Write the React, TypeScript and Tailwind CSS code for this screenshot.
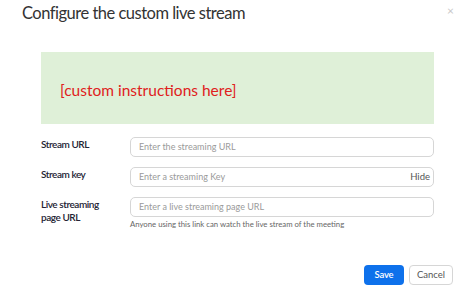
import React from "react";

function Field({ label, placeholder, hide, help }: { label: React.ReactNode; placeholder: string; hide?: boolean; help?: string }) {
  return (
    <div className="flex">
      <div className="w-[89px] text-[10px] tracking-[-0.45px] leading-[13px] font-semibold text-[#232333] pt-[1px]">{label}</div>
      <div className="flex flex-col">
        <div className="w-[304px] h-[20px] border border-[#d6d6d6] rounded-[5px] flex items-center justify-between pl-[8px] pr-[3px]">
          <span className="text-[9px] text-[#9a9a9a]">{placeholder}</span>
          {hide && <span className="text-[9.5px] text-[#555]">Hide</span>}
        </div>
        {help && <div className="text-[7.75px] text-[#666] mt-[2px] leading-[10px]">{help}</div>}
      </div>
    </div>
  );
}

export default function App() {
  return (
    <div className="w-[474px] h-[299px] bg-white relative overflow-hidden font-[Lato,'Open_Sans',sans-serif]">
      <div className="absolute right-[20px] top-[2px] text-[12px] text-[#c8c8c8]">×</div>
      <div className="pl-[22px] pt-[1px] text-[16.5px] tracking-[-0.5px] leading-[24px] text-[#333]">Configure the custom live stream</div>
      <div className="ml-[41px] mt-[27px] w-[393px] h-[72px] bg-[#dff0d8] pl-[19px] pt-[26px]">
        <span className="text-[15.5px] text-[#e02020]">[custom instructions here]</span>
      </div>
      <div className="ml-[41px] mt-[13px] flex flex-col gap-[10px]">
        <Field label="Stream URL" placeholder="Enter the streaming URL" />
        <Field label="Stream key" placeholder="Enter a streaming Key" hide />
        <Field label={<>Live streaming<br />page URL</>} placeholder="Enter a live streaming page URL" help="Anyone using this link can watch the live stream of the meeting" />
      </div>
      <div className="mt-[36px] pr-[21px] flex justify-end gap-[5px]">
        <button className="w-[40px] h-[20px] rounded-[4px] bg-[#0e71eb] text-white text-[9.5px] font-semibold tracking-[-0.2px]">Save</button>
        <button className="w-[44px] h-[20px] rounded-[4px] border border-[#d6d6d6] bg-white text-[#555] text-[9.5px]">Cancel</button>
      </div>
    </div>
  );
}
